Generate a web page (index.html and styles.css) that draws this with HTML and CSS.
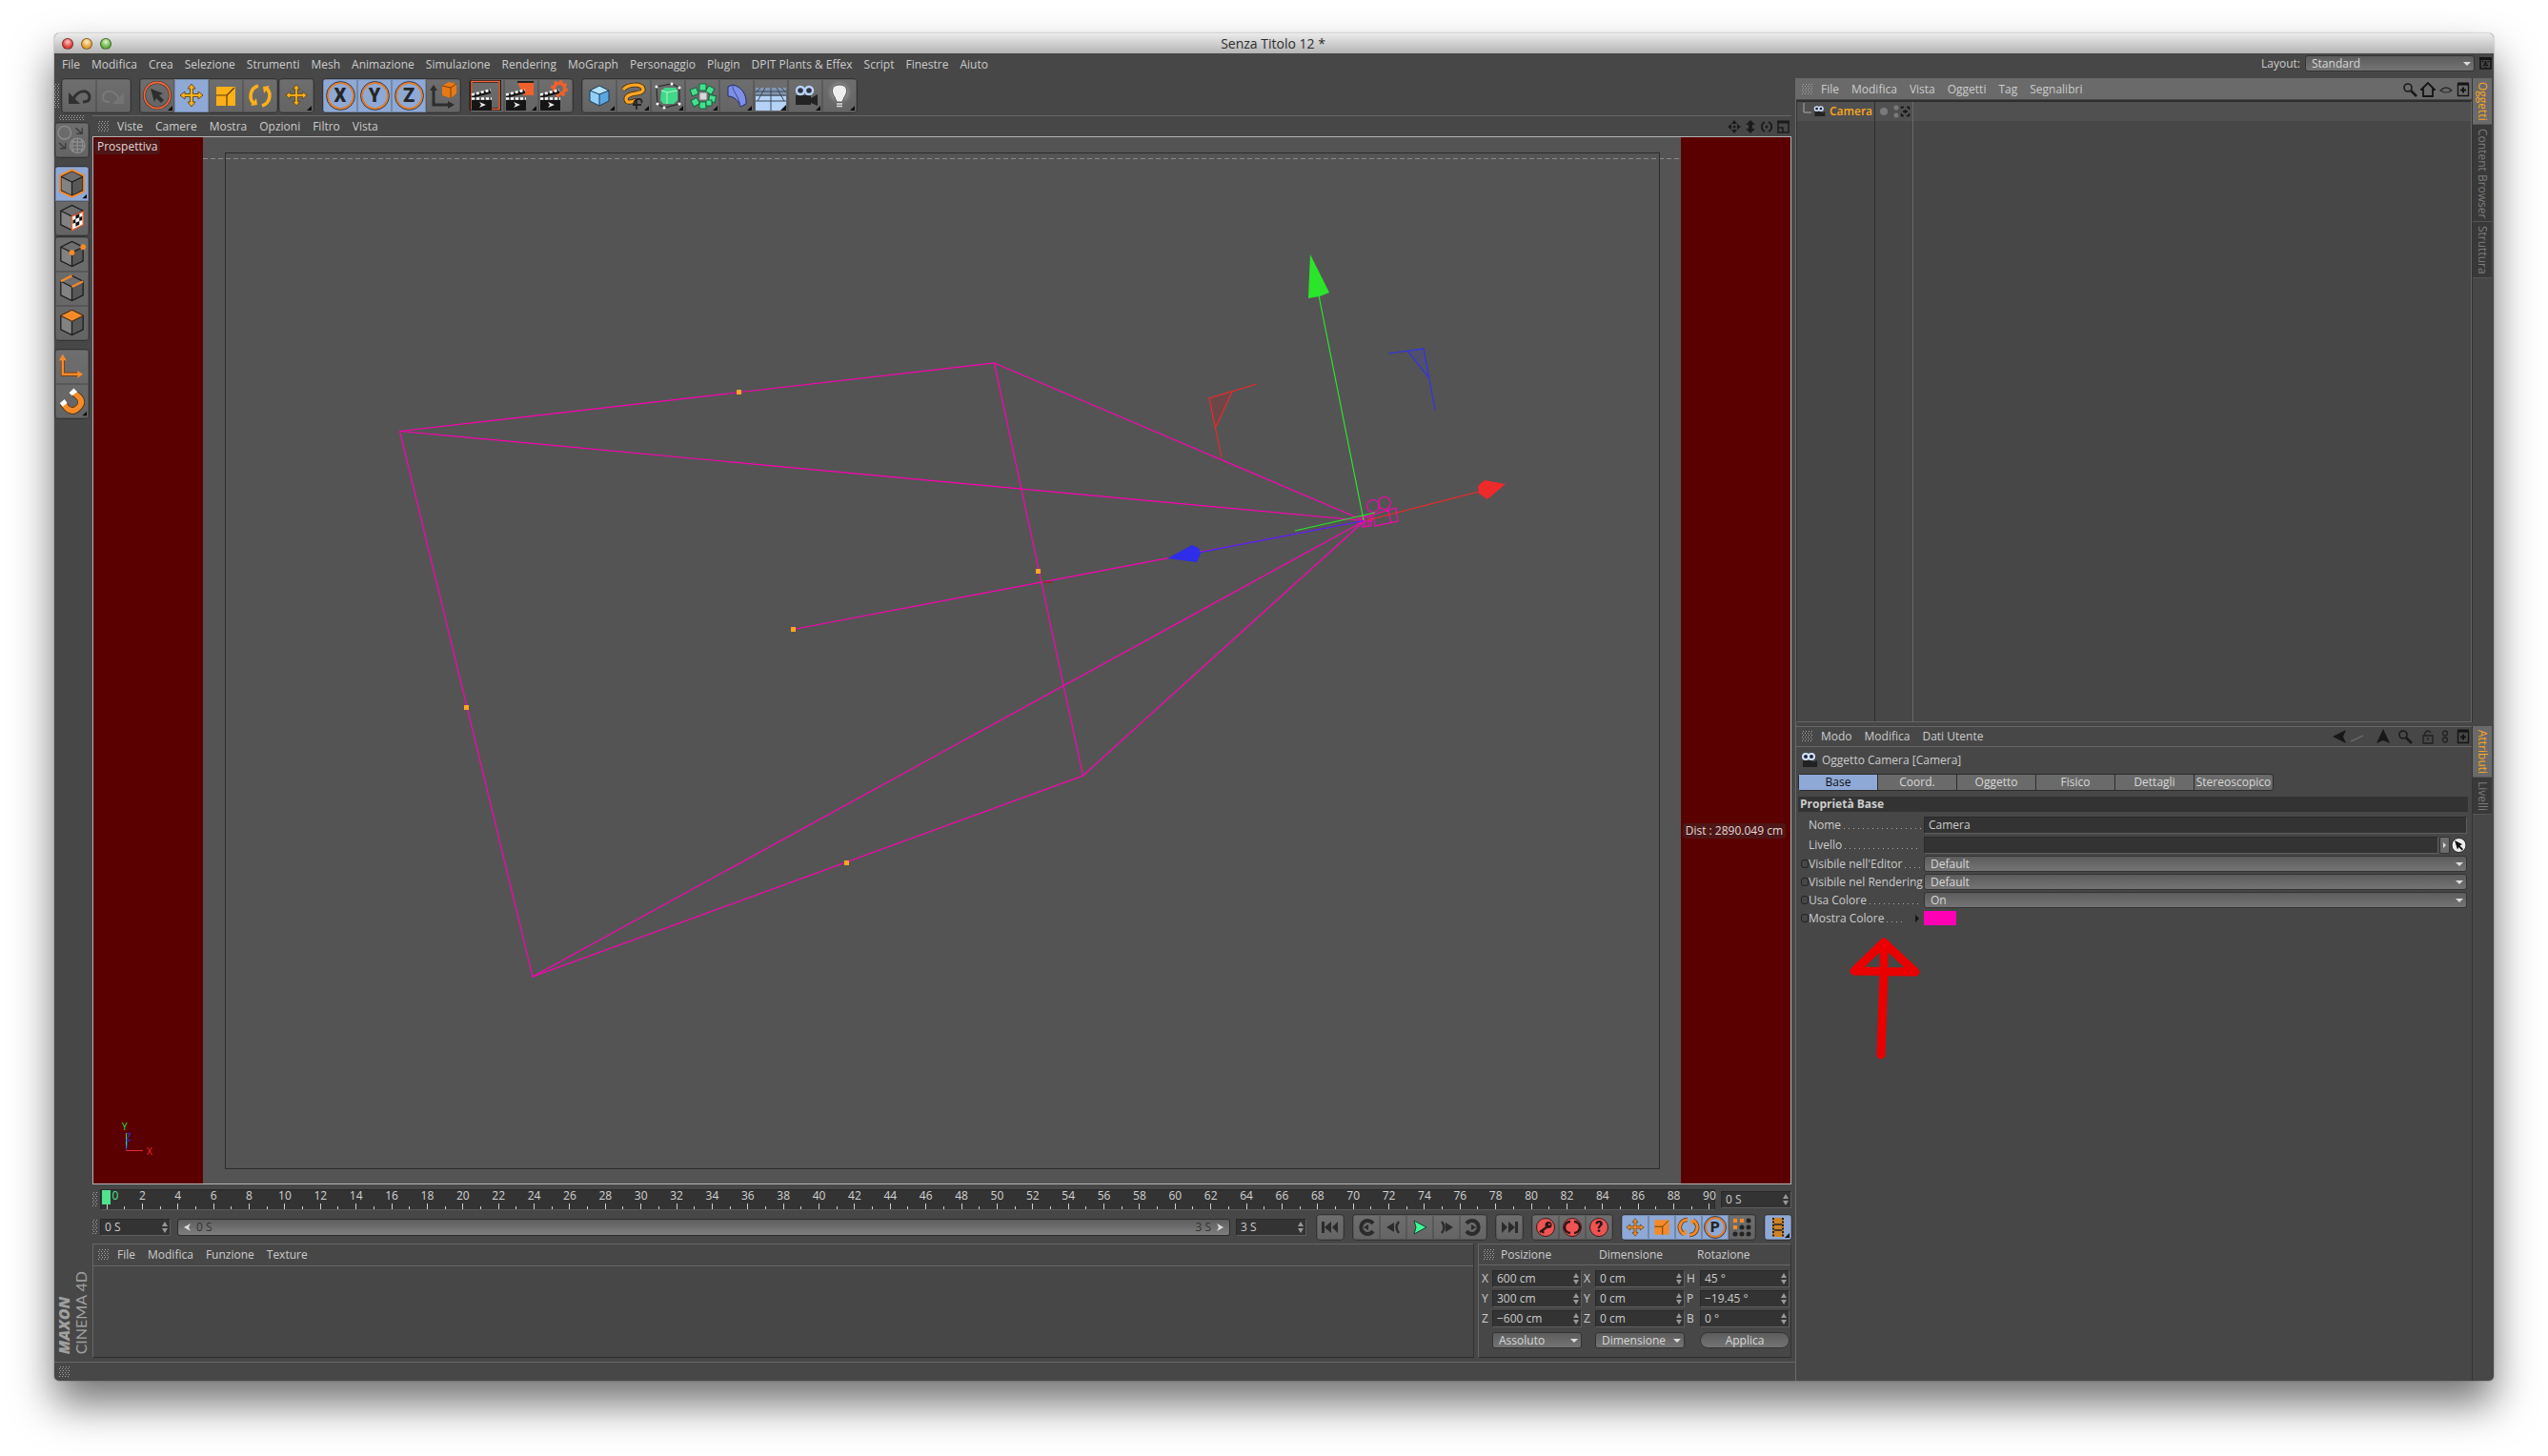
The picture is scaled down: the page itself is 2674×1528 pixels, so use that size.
FILE: index.html
```html
<!DOCTYPE html>
<html lang="it">
<head>
<meta charset="utf-8">
<title>Senza Titolo 12 *</title>
<link rel="stylesheet" href="styles.css">
</head>
<body>
<svg class="defs" aria-hidden="true">
  <defs>
    <symbol id="cube" viewBox="0 0 36 36">
      <path d="M6 10L18 16V31L6 25Z" fill="#828282"/><path d="M18 16L30 10V25L18 31Z" fill="#585858"/><path d="M6 10L18 4L30 10L18 16Z" fill="#6e6e6e"/>
      <path d="M6 10L18 4L30 10V25L18 31L6 25ZM6 10L18 16L30 10M18 16V31" fill="none" stroke="#1c1c1c" stroke-width="1.3"/>
    </symbol>
    <symbol id="move" viewBox="0 0 26 26">
      <path d="M13 1L17 6H14.500V11.500H20V9L25 13L20 17V14.500H14.500V20H17L13 25L9 20H11.500V14.500H6V17L1 13L6 9V11.500H11.500V6H9Z" stroke="#4b3a10" stroke-width=".8"/>
    </symbol>
    <symbol id="scale" viewBox="0 0 26 26">
      <rect x="3" y="3" width="20" height="20" fill="currentColor"/><path d="M3 12H14V23M14 12L22 4" fill="none" stroke="#5a3d08" stroke-width="1.2"/>
    </symbol>
    <symbol id="clap" viewBox="0 0 36 35">
      <path d="M2 22H23V33H2Z" fill="#151515"/><path d="M2 17L22 11V15L2 20Z" fill="#151515"/>
      <path d="M2 16.500L22 11.500M2 20.500H23" stroke="#fff" stroke-width="2.600" stroke-dasharray="3 2"/>
      <path d="M10 24L17 27L10 30L12 27Z" fill="#e8e8e8"/>
    </symbol>
    <symbol id="cam" viewBox="0 0 18 16">
      <path d="M2 8H12V10L17 8V15H2Z" fill="#222"/><circle cx="5" cy="4" r="3" fill="#223" stroke="#cfe2ff" stroke-width="2"/><circle cx="11" cy="4" r="3" fill="#223" stroke="#cfe2ff" stroke-width="2"/>
    </symbol>
    <symbol id="more" viewBox="0 0 6 6"><path d="M6 0V6H0Z" fill="#0c0c0c"/></symbol>
    <symbol id="step" viewBox="0 0 6 12"><path d="M3 0L6 5H0ZM3 12L6 7H0Z" fill="#999"/></symbol>
    <symbol id="lens" viewBox="0 0 16 16"><circle cx="6" cy="6" r="4" fill="none" stroke="#1a1a1a" stroke-width="1.600"/><path d="M9 9L15 15" stroke="#1a1a1a" stroke-width="2.600"/></symbol>
    <symbol id="plus" viewBox="0 0 14 16"><path d="M1.500 2.500H12.500V14.500H1.500Z" fill="none" stroke="#151515" stroke-width="1.400"/><path d="M1 2H13" stroke="#151515" stroke-width="3"/><path d="M4 8.500H10M7 5.500V11.500" stroke="#151515" stroke-width="2"/></symbol>
  </defs>
</svg>
<div class="window">
  <header class="titlebar">
    <div class="lights"><span class="light red"></span><span class="light amber"></span><span class="light green"></span></div>
    <h1>Senza Titolo 12 *</h1>
  </header>
  <div class="menubar">
    <nav class="menu main-menu"><a href="#">File</a><a href="#">Modifica</a><a href="#">Crea</a><a href="#">Selezione</a><a href="#">Strumenti</a><a href="#">Mesh</a><a href="#">Animazione</a><a href="#">Simulazione</a><a href="#">Rendering</a><a href="#">MoGraph</a><a href="#">Personaggio</a><a href="#">Plugin</a><a href="#">DPIT Plants &amp; Effex</a><a href="#">Script</a><a href="#">Finestre</a><a href="#">Aiuto</a></nav>
    <div class="layout-pick">
      <label for="layout">Layout:</label>
      <span class="drop drop-layout"><select id="layout"><option>Standard</option></select></span>
      <svg width="13" height="13" viewBox="0 0 13 13"><path d="M1 2H12V12H1Z" fill="none" stroke="#151515" stroke-width="1.500"/><path d="M0 1.500H13" stroke="#151515" stroke-width="3"/><path d="M3 4L10 10M10 4L3 10M6.500 4V11" stroke="#151515" stroke-width="1.500" stroke-dasharray="2 1"/></svg>
    </div>
  </div>
  <div class="workspace">
    <section class="left">
      <div class="toolbar">
        <span class="grip grip-tall"></span>
        <div class="group">
          <button class="tool" aria-label="Annulla"><svg viewBox="0 0 36 35"><path d="M12 21C17 10 29 11 29 19C29 22 27 24 22 24" fill="none" stroke="#303030" stroke-width="3"/><path d="M7 14V26H19Z" fill="#303030"/></svg></button>
          <button class="tool" aria-label="Ripeti"><svg viewBox="0 0 36 35"><path d="M24 21C19 10 7 11 7 19C7 22 9 24 14 24" fill="none" stroke="#7a7a7a" stroke-width="2"/><path d="M29 14V26H17Z" fill="#747474"/></svg></button>
        </div>
        <div class="cluster">
        <div class="group">
          <button class="tool" aria-label="Seleziona"><svg viewBox="0 0 36 35"><circle cx="18" cy="17" r="13.500" fill="none" stroke="#3a2a24" stroke-width="3"/><circle cx="18" cy="17" r="13.500" fill="none" stroke="#f0683c" stroke-width="1.800"/><path d="M11 10L24 15L20 17L25 22L22 25L17 20L15 24Z" fill="#2e2e2e"/><use href="#more" x="29" y="28" width="5" height="5"/></svg></button>
          <button class="tool on" aria-label="Muovi"><svg viewBox="0 0 36 35"><use href="#move" x="5" y="4" width="26" height="26" fill="#fbb017"/></svg></button>
          <button class="tool amber-ink" aria-label="Scala"><svg viewBox="0 0 36 35"><use href="#scale" x="5" y="5" width="26" height="26"/></svg></button>
          <button class="tool" aria-label="Ruota"><svg viewBox="0 0 36 35"><path d="M16 7A11 11 0 0 0 12 26M20 28A11 11 0 0 0 24 9" fill="none" stroke="#fbb017" stroke-width="3.600"/><path d="M8 28L15 27L14 20ZM28 7L21 8L22 15Z" fill="#fbb017"/></svg></button>
        </div>
        <div class="group"><button class="tool" aria-label="Ultimo strumento"><svg viewBox="0 0 36 35"><use href="#move" x="6" y="5" width="24" height="24" fill="#fbb017"/><use href="#more" x="29" y="28" width="5" height="5"/></svg></button></div>
        </div>
        <div class="group">
          <button class="tool on axis" aria-label="Asse X"><span>X</span></button>
          <button class="tool on axis" aria-label="Asse Y"><span>Y</span></button>
          <button class="tool on axis" aria-label="Asse Z"><span>Z</span></button>
          <button class="tool" aria-label="Sistema di coordinate"><svg viewBox="0 0 36 35"><path d="M8 10V27H24" fill="none" stroke="#2e2e2e" stroke-width="3"/><path d="M4 12L8 6L12 12ZM23 23L30 27L23 31Z" fill="#2e2e2e"/><path d="M17 7L24 3L32 5V15L26 20L17 17Z" fill="#e87a14"/><path d="M17 7L26 9L32 5M26 9V20" fill="none" stroke="#7a3c04"/></svg></button>
        </div>
        <div class="group">
          <button class="tool" aria-label="Render vista"><svg viewBox="0 0 36 35"><rect x="1.500" y="2.500" width="30" height="29" fill="none" stroke="#1b1b1b" stroke-width="3"/><rect x="2" y="2.500" width="29" height="29" fill="none" stroke="#f0683c" stroke-width="1.500"/><use href="#clap" width="36" height="35"/></svg></button>
          <button class="tool" aria-label="Render"><svg viewBox="0 0 36 35"><path d="M14 3H31V17H20Z" fill="#f0602c"/><path d="M14 3H31" stroke="#222" stroke-width="2"/><use href="#clap" width="36" height="35"/><use href="#more" x="29" y="28" width="5" height="5"/></svg></button>
          <button class="tool" aria-label="Impostazioni di render"><svg viewBox="0 0 36 35"><circle cx="22" cy="10" r="5.500" fill="none" stroke="#f0602c" stroke-width="3.500"/><circle cx="22" cy="10" r="7.500" fill="none" stroke="#f0602c" stroke-width="3" stroke-dasharray="3 2.890"/><use href="#clap" width="36" height="35"/></svg></button>
        </div>
        <div class="group">
          <button class="tool" aria-label="Cubo"><svg viewBox="0 0 36 35"><path d="M8 12L18 16V28L8 23Z" fill="#8fd0fb"/><path d="M18 16L28 12V23L18 28Z" fill="#5aa6e0"/><path d="M8 12L18 7L28 12L18 16Z" fill="#b5e2ff"/><path d="M8 12L18 7L28 12V23L18 28L8 23ZM8 12L18 16L28 12M18 16V28" fill="none" stroke="#1d3b52"/><use href="#more" x="29" y="28" width="5" height="5"/></svg></button>
          <button class="tool" aria-label="Spline"><svg viewBox="0 0 36 35"><path d="M7 11C12 5 28 4 28 11C28 17 10 13 10 21C10 26 17 24 21 22" fill="none" stroke="#4a2e08" stroke-width="5"/><path d="M7 11C12 5 28 4 28 11C28 17 10 13 10 21C10 26 17 24 21 22" fill="none" stroke="#fba524" stroke-width="3.400"/><path d="M18 26C20 18 29 21 26 25M21 22V32M17 27H26" fill="none" stroke="#222" stroke-width="1.800"/><use href="#more" x="29" y="28" width="5" height="5"/></svg></button>
          <button class="tool" aria-label="Nurbs"><svg viewBox="0 0 36 35"><path d="M6 8L22 5L30 9V26L14 30L7 26Z" fill="none" stroke="#2a2a2a" stroke-width="1.200"/><path d="M11 12L15 9H26L28 13V22L24 26H13L10 22Z" fill="#3fd98a"/><path d="M11 12L17 14V26M17 14L28 12" fill="none" stroke="#aef7d0"/><g fill="#fff"><circle cx="6" cy="8" r="1.500"/><circle cx="22" cy="5" r="1.500"/><circle cx="30" cy="9" r="1.500"/><circle cx="30" cy="26" r="1.500"/><circle cx="14" cy="30" r="1.500"/><circle cx="7" cy="26" r="1.500"/></g><use href="#more" x="29" y="28" width="5" height="5"/></svg></button>
          <button class="tool" aria-label="Modellazione"><svg viewBox="0 0 36 35"><g fill="#45e08f" stroke="#14643c"><rect x="15" y="5" width="7" height="7"/><rect x="23" y="8" width="7" height="7" transform="rotate(30 26 11)"/><rect x="25" y="17" width="7" height="7" transform="rotate(10 28 20)"/><rect x="15" y="24" width="7" height="7"/><rect x="7" y="21" width="7" height="7" transform="rotate(-30 10 24)"/><rect x="6" y="10" width="7" height="7" transform="rotate(-20 9 13)"/><rect x="22" y="22" width="6" height="6"/></g><rect x="15" y="14" width="8" height="8" fill="#d8d8d8" stroke="#777"/><use href="#more" x="29" y="28" width="5" height="5"/></svg></button>
          <button class="tool" aria-label="Deformatore"><svg viewBox="0 0 36 35"><path d="M9 8L14 6C23 8 29 16 28 26L22 29C20 22 15 18 9 18Z" fill="#7f8fe6" stroke="#242c66"/><path d="M14 6C13 13 20 16 22 29" fill="none" stroke="#3c489a"/><use href="#more" x="29" y="28" width="5" height="5"/></svg></button>
          <button class="tool" aria-label="Scena"><svg viewBox="0 0 36 35"><path d="M2 9H34V33H2Z" fill="#b4d2f6"/><path d="M2 9H34V18H2Z" fill="#8296ae"/><path d="M2 13H34M2 17H34M2 23H34M18 9V33M12 9L4 23M24 9L32 23M7 9L2 14M29 9L34 14" stroke="#3a4656" stroke-width="1"/><path d="M34 27V33H28Z" fill="#111"/></svg></button>
          <button class="tool" aria-label="Camera"><svg viewBox="0 0 36 35"><path d="M8 17H24V20L31 16V28L24 25V27H8Z" fill="#242424"/><circle cx="13" cy="12" r="4" fill="#334" stroke="#b9d4fa" stroke-width="2.400"/><circle cx="22" cy="12" r="4" fill="#334" stroke="#b9d4fa" stroke-width="2.400"/><use href="#more" x="29" y="28" width="5" height="5"/></svg></button>
          <button class="tool" aria-label="Luce"><svg viewBox="0 0 36 35"><defs><radialGradient id="halo"><stop offset=".3" stop-color="#ccc" stop-opacity=".8"/><stop offset="1" stop-color="#777" stop-opacity="0"/></radialGradient></defs><circle cx="18" cy="14" r="14" fill="url(#halo)"/><path d="M18 6C9 6 9 14 13 19L15 24H21L23 19C27 14 27 6 18 6Z" fill="#eee" stroke="#555"/><path d="M15 26H21M15 28.500H21" stroke="#ddd" stroke-width="1.500"/><use href="#more" x="29" y="28" width="5" height="5"/></svg></button>
        </div>
      </div>
      <div class="stage">
        <aside class="modes">
          <span class="grip grip-wide"></span>
          <div class="group group-v"><button class="tool" aria-label="Converti"><svg viewBox="0 0 36 36"><g fill="none" stroke="#8c8c8c" stroke-width="1.400"><circle cx="10" cy="10" r="7"/><circle cx="24" cy="24" r="8"/><path d="M24 16V32M16 24H32M18 19Q24 22 30 19M18 29Q24 26 30 29M20 17Q17 24 20 31M28 17Q31 24 28 31"/><path d="M22 5L29 11M29 5V11H23M4 21L11 27M11 21V27H5" stroke="#3c3c3c"/></g></svg></button></div>
          <div class="cluster cluster-v">
          <div class="group group-v">
            <button class="tool on" aria-label="Modo oggetto"><svg viewBox="0 0 36 36"><use href="#cube" width="36" height="36"/><path d="M5 9L18 3L31 9V26L18 32L5 26Z" fill="none" stroke="#f58a28" stroke-width="2"/><use href="#more" x="29" y="29" width="5" height="5"/></svg></button>
            <button class="tool" aria-label="Modo texture"><svg viewBox="0 0 36 36"><use href="#cube" width="36" height="36"/><path d="M18 16L30 11V25L18 31Z" fill="#fff" stroke="#f0683c" stroke-width="1.500"/><path d="M22 15L26 13V17L22 19ZM19 20L22 19V23L19 24ZM26 17L29 16V20L26 21ZM22 23L26 21V25L22 27Z" fill="#111"/></svg></button>
          </div>
          <div class="group group-v">
            <button class="tool" aria-label="Modo punti"><svg viewBox="0 0 36 36"><use href="#cube" width="36" height="36"/><circle cx="18" cy="16" r="3" fill="#f58a28"/><circle cx="30" cy="10" r="3" fill="#f58a28"/></svg></button>
            <button class="tool" aria-label="Modo spigoli"><svg viewBox="0 0 36 36"><use href="#cube" width="36" height="36"/><path d="M6 10L18 4M18 16L30 10" stroke="#f58a28" stroke-width="2.400"/></svg></button>
            <button class="tool" aria-label="Modo poligoni"><svg viewBox="0 0 36 36"><use href="#cube" width="36" height="36"/><path d="M6 10L18 4L30 10L18 16Z" fill="#f58a28" stroke="#5a300a" stroke-width=".8"/></svg></button>
          </div>
          </div>
          <div class="group group-v">
            <button class="tool" aria-label="Asse oggetto"><svg viewBox="0 0 36 36"><path d="M8 9V26H26" fill="none" stroke="#6a3408" stroke-width="4"/><path d="M8 9V26H26" fill="none" stroke="#f58a28" stroke-width="2.600"/><path d="M4 11L8 4L12 11ZM24 22L30 26L24 30Z" fill="#f58a28"/></svg></button>
            <button class="tool" aria-label="Snap"><svg viewBox="0 0 36 36"><path d="M8 20L13 26Q19 31 25 25T25 13L19 8" fill="none" stroke="#4a2a0a" stroke-width="7.500"/><path d="M8 20L13 26Q19 31 25 25T25 13L19 8" fill="none" stroke="#f58a28" stroke-width="6"/><path d="M5 20L10 16L13 20L8 24ZM15 9L20 4L24 8L18 12Z" fill="#fff"/><use href="#more" x="29" y="29" width="5" height="5"/></svg></button>
          </div>
          <div class="brand"><b>MAXON</b><span>CINEMA 4D</span></div>
        </aside>
        <div class="center">
          <div class="panel-menu">
            <span class="grip"></span>
            <nav class="menu"><a href="#">Viste</a><a href="#">Camere</a><a href="#">Mostra</a><a href="#">Opzioni</a><a href="#">Filtro</a><a href="#">Vista</a></nav>
            <svg class="view-nav" width="66" height="14" viewBox="0 0 66 14"><g fill="#1b1b1b"><path d="M7 0L10 4H4ZM7 14L10 10H4ZM0 7L4 4V10ZM14 7L10 4V10Z"/><circle cx="7" cy="7" r="1.500"/><path d="M24 0L29 5H26V9H29L24 14L19 9H22V5H19Z"/></g><path d="M39 2A5.500 5.500 0 0 0 39 12M43 12A5.500 5.500 0 0 0 43 2" fill="none" stroke="#1b1b1b" stroke-width="1.800"/><circle cx="41" cy="7" r="1.500" fill="#1b1b1b"/><path d="M53 2H64V13H53ZM53 8H58V13" fill="none" stroke="#1b1b1b" stroke-width="1.500"/><path d="M52 2H65" stroke="#1b1b1b" stroke-width="3"/></svg>
          </div>
          <div class="viewport">
            <svg class="scene" viewBox="98 144 1781 1098" preserveAspectRatio="none">
              <rect x="98" y="144" width="115" height="1098" fill="#5a0000"/>
              <rect x="1764" y="144" width="115" height="1098" fill="#5a0000"/>
              <path d="M213 166.500H1764" stroke="#8a8a8a" stroke-dasharray="5 3"/>
              <rect x="236.500" y="160.500" width="1505" height="1066" fill="none" stroke="#2c2c2c"/>
              <g fill="none" stroke="#ff00b4" stroke-width="1.200">
                <path d="M419.500 452.500L1043.500 381L1136.500 814L559 1025Z"/>
                <path d="M419.500 452.500L1432 546.500L1043.500 381M1136.500 814L1432 546.500L559 1025M832.500 660.500L1432 546.500"/>
                <circle cx="1441" cy="531" r="6.500"/><circle cx="1453" cy="528" r="6.500"/>
                <path d="M1441 540L1465 533L1467 547L1443 552ZM1457 535L1460 549M1428 543L1439 541V552L1430 553ZM1432 541V552M1436 541V552M1428 547H1440"/>
              </g>
              <g fill="#ffa51e"><path d="M773 409h5v5h-5zM830 658h5v5h-5zM1087 597h5v5h-5zM487 740h5v5h-5zM886 903h5v5h-5z"/></g>
              <path d="M1095 611H1104" stroke="#b01010"/><path d="M1095.500 611V604" stroke="#148014"/>
              <path d="M1431 546L1384 310M1359 557L1443 538" stroke="#2be52b" stroke-width="1.200"/><path d="M1375 267L1395 307L1385 311L1373 313Z" fill="#2be52b"/>
              <path d="M1431 546.500L1258 580" stroke="#3030f0" stroke-width="1.200"/><path d="M1225 586L1251 572L1258 575L1260 581L1256 590Z" fill="#2e2ee8"/>
              <path d="M1435 546L1552 516" stroke="#f02828" stroke-width="1.200"/><path d="M1580 508L1558 504L1551 510L1552 518L1561 524Z" fill="#ee2a2a"/>
              <path d="M1269 418L1293 411L1276 448Z" fill="#6b4747"/><path d="M1319 403L1269 418L1282 480M1293 411L1276 448" fill="none" stroke="#f02828" stroke-width="1.200"/>
              <path d="M1477 368L1494 366L1499 396Z" fill="#50506c"/><path d="M1457 371L1494 366L1506 430M1477 368L1499 396" fill="none" stroke="#3030f0" stroke-width="1.200"/>
              <path d="M132.500 1189V1207" stroke="#2be52b"/><path d="M132.500 1207.500H150" stroke="#f02828"/><path d="M132.500 1207L134 1197" stroke="#3030f0"/>
              <g class="axis-name"><text x="128" y="1186" fill="#2be52b">Y</text><text x="154" y="1212" fill="#f02828">X</text><text x="132" y="1197" fill="#3030f0">Z</text></g>
            </svg>
            <span class="tag tag-view">Prospettiva</span>
            <span class="tag tag-dist">Dist : 2890.049 cm</span>
          </div>
          <div class="timeline">
            <span class="grip grip-slim"></span>
            <ol class="ruler"><li class="now">0</li><li></li><li>2</li><li></li><li>4</li><li></li><li>6</li><li></li><li>8</li><li></li><li>10</li><li></li><li>12</li><li></li><li>14</li><li></li><li>16</li><li></li><li>18</li><li></li><li>20</li><li></li><li>22</li><li></li><li>24</li><li></li><li>26</li><li></li><li>28</li><li></li><li>30</li><li></li><li>32</li><li></li><li>34</li><li></li><li>36</li><li></li><li>38</li><li></li><li>40</li><li></li><li>42</li><li></li><li>44</li><li></li><li>46</li><li></li><li>48</li><li></li><li>50</li><li></li><li>52</li><li></li><li>54</li><li></li><li>56</li><li></li><li>58</li><li></li><li>60</li><li></li><li>62</li><li></li><li>64</li><li></li><li>66</li><li></li><li>68</li><li></li><li>70</li><li></li><li>72</li><li></li><li>74</li><li></li><li>76</li><li></li><li>78</li><li></li><li>80</li><li></li><li>82</li><li></li><li>84</li><li></li><li>86</li><li></li><li>88</li><li></li><li>90</li></ol>
            <span class="field field-time"><input type="text" aria-label="Tempo corrente" value="0 S"><svg><use href="#step"/></svg></span>
          </div>
          <div class="transport">
            <span class="grip grip-slim"></span>
            <span class="field field-time"><input type="text" aria-label="Inizio" value="0 S"><svg><use href="#step"/></svg></span>
            <div class="range"><span><svg width="7" height="8" viewBox="0 0 7 8"><path d="M0 4L7 0L5 4L7 8Z" fill="#ddd"/></svg>0 S</span><span>3 S<svg width="7" height="8" viewBox="0 0 7 8"><path d="M7 4L0 0L2 4L0 8Z" fill="#ddd"/></svg></span></div>
            <span class="field field-time"><input type="text" aria-label="Fine" value="3 S"><svg><use href="#step"/></svg></span>
            <div class="players">
              <div class="group small"><button class="tool" aria-label="Vai all'inizio"><svg viewBox="0 0 28 26"><path d="M5 7H8V19H5ZM15 7V19L8 13ZM22 7L16 13L22 19Z" fill="#2b2b2b"/></svg></button></div>
              <div class="group small">
                <button class="tool" aria-label="Chiave precedente"><svg viewBox="0 0 28 26"><path d="M21 9A7 7 0 1 0 21 17" fill="none" stroke="#2b2b2b" stroke-width="4"/><path d="M11 13L16 10V16Z" fill="#2b2b2b"/></svg></button>
                <button class="tool" aria-label="Fotogramma precedente"><svg viewBox="0 0 28 26"><path d="M7 13L15 8V18Z" fill="#2b2b2b"/><path d="M20 7Q15 13 20 19" fill="none" stroke="#2b2b2b" stroke-width="2.400"/></svg></button>
                <button class="tool" aria-label="Riproduci"><svg viewBox="0 0 28 26"><path d="M8 6L21 13L8 20L10 13Z" fill="#3dfa96" stroke="#1b3a2a"/></svg></button>
                <button class="tool" aria-label="Fotogramma successivo"><svg viewBox="0 0 28 26"><path d="M21 13L13 8V18Z" fill="#2b2b2b"/><path d="M9 7Q14 13 9 19" fill="none" stroke="#2b2b2b" stroke-width="2.400"/></svg></button>
                <button class="tool" aria-label="Chiave successiva"><svg viewBox="0 0 28 26"><path d="M7 9A7 7 0 1 1 7 17" fill="none" stroke="#2b2b2b" stroke-width="4"/><path d="M17 13L12 10V16Z" fill="#2b2b2b"/></svg></button>
              </div>
              <div class="group small"><button class="tool" aria-label="Vai alla fine"><svg viewBox="0 0 28 26"><path d="M23 7H20V19H23ZM13 7V19L20 13ZM6 7L12 13L6 19Z" fill="#2b2b2b"/></svg></button></div>
              <div class="group small">
                <button class="tool" aria-label="Registra chiave"><svg viewBox="0 0 28 26"><circle cx="14" cy="13" r="9.500" fill="#ee5454" stroke="#3b1a1a"/><circle cx="17" cy="10.500" r="3.500" fill="#2b1414"/><path d="M15 13L8 18M10 16L12 19" stroke="#2b1414" stroke-width="2.400"/><circle cx="18" cy="10" r="1" fill="#ee5454"/></svg></button>
                <button class="tool" aria-label="Autochiave"><svg viewBox="0 0 28 26"><circle cx="14" cy="13" r="9.500" fill="#ee5454" stroke="#3b1a1a"/><path d="M12 7A6 6 0 0 0 12 19M16 7A6 6 0 0 1 16 19" fill="none" stroke="#2b1414" stroke-width="2.400"/></svg></button>
                <button class="tool ask" aria-label="Selezione chiavi"><span>?</span></button>
              </div>
              <div class="group small">
                <button class="tool on" aria-label="Posizione"><svg viewBox="0 0 28 26"><use href="#move" x="4" y="3" width="20" height="20" fill="#f58a28"/></svg></button>
                <button class="tool on orange-ink" aria-label="Scala"><svg viewBox="0 0 28 26"><use href="#scale" x="4" y="3" width="20" height="20"/></svg></button>
                <button class="tool on" aria-label="Rotazione"><svg viewBox="0 0 28 26"><path d="M13 5A8 8 0 0 0 9 20M15 21A8 8 0 0 0 19 6" fill="none" stroke="#5a3a1a" stroke-width="4.500"/><path d="M13 5A8 8 0 0 0 9 20M15 21A8 8 0 0 0 19 6" fill="none" stroke="#f58a28" stroke-width="3"/><path d="M6 21L12 21L11 15ZM22 5L16 5L17 11Z" fill="#f58a28"/></svg></button>
                <button class="tool on axis axis-small" aria-label="Parametri"><span>P</span></button>
                <button class="tool" aria-label="PLA"><svg viewBox="0 0 28 26"><g fill="#222"><circle cx="21" cy="6" r="2.500"/><circle cx="14" cy="13" r="2.500"/><circle cx="21" cy="13" r="2.500"/><circle cx="7" cy="20" r="2.500"/><circle cx="14" cy="20" r="2.500"/><circle cx="21" cy="20" r="2.500"/></g><path d="M5 4h4v4h-4zM12 4h4v4h-4zM5 11h4v4h-4z" fill="#f58a28"/></svg></button>
              </div>
              <div class="group small"><button class="tool on" aria-label="Timeline"><svg viewBox="0 0 28 26"><path d="M8 3H20V23H8Z" fill="#d08224"/><path d="M9 3V23M19 3V23" stroke="#222" stroke-width="2" stroke-dasharray="2 1.500"/><path d="M10 10H18M10 16H18" stroke="#222" stroke-width="1.500"/><use href="#more" x="21" y="19" width="5" height="5"/></svg></button></div>
            </div>
          </div>
          <div class="bottom">
            <section class="materials">
              <div class="panel-menu"><span class="grip"></span><nav class="menu"><a href="#">File</a><a href="#">Modifica</a><a href="#">Funzione</a><a href="#">Texture</a></nav></div>
            </section>
            <section class="coords">
              <div class="coords-head"><span class="grip"></span><span>Posizione</span><span>Dimensione</span><span>Rotazione</span></div>
              <form class="coords-grid">
                <label for="px">X</label><span class="field"><input id="px" type="text" value="600 cm"><svg><use href="#step"/></svg></span>
                <label for="sx">X</label><span class="field"><input id="sx" type="text" value="0 cm"><svg><use href="#step"/></svg></span>
                <label for="rh">H</label><span class="field"><input id="rh" type="text" value="45 °"><svg><use href="#step"/></svg></span>
                <label for="py">Y</label><span class="field"><input id="py" type="text" value="300 cm"><svg><use href="#step"/></svg></span>
                <label for="sy">Y</label><span class="field"><input id="sy" type="text" value="0 cm"><svg><use href="#step"/></svg></span>
                <label for="rp">P</label><span class="field"><input id="rp" type="text" value="−19.45 °"><svg><use href="#step"/></svg></span>
                <label for="pz">Z</label><span class="field"><input id="pz" type="text" value="−600 cm"><svg><use href="#step"/></svg></span>
                <label for="sz">Z</label><span class="field"><input id="sz" type="text" value="0 cm"><svg><use href="#step"/></svg></span>
                <label for="rb">B</label><span class="field"><input id="rb" type="text" value="0 °"><svg><use href="#step"/></svg></span>
                <span class="drop col-pos"><select aria-label="Modo posizione"><option>Assoluto</option></select></span>
                <span class="drop col-dim"><select aria-label="Modo dimensione"><option>Dimensione</option></select></span>
                <button type="button" class="apply col-rot">Applica</button>
              </form>
            </section>
          </div>
        </div>
      </div>
      <footer class="status"><span class="grip"></span></footer>
    </section>
    <section class="right">
      <div class="dock">
        <div class="panel">
          <div class="panel-menu panel-menu-lit">
            <span class="grip"></span>
            <nav class="menu"><a href="#">File</a><a href="#">Modifica</a><a href="#">Vista</a><a href="#">Oggetti</a><a href="#">Tag</a><a href="#">Segnalibri</a></nav>
            <div class="panel-icons">
              <svg width="16" height="16"><use href="#lens"/></svg>
              <svg width="16" height="16" viewBox="0 0 16 16"><path d="M1 8L8 1L15 8H13V15H3V8Z" fill="none" stroke="#151515" stroke-width="1.800"/></svg>
              <svg width="16" height="16" viewBox="0 0 16 16"><path d="M2 9Q8 3 14 9Q8 13 2 9Z" fill="none" stroke="#2a2a2a" stroke-width="1.200"/></svg>
              <svg width="14" height="16"><use href="#plus"/></svg>
            </div>
          </div>
          <div class="objects">
            <div class="obj-name"><div class="obj-row"><svg width="10" height="20" viewBox="0 0 10 20"><path d="M1 1V11H9" fill="none" stroke="#aaa"/></svg><svg width="13" height="12"><use href="#cam"/></svg><a href="#">Camera</a></div></div>
            <div class="obj-flags"><div class="obj-row"><svg width="38" height="18" viewBox="0 0 38 18"><circle cx="9" cy="9" r="4" fill="#7a7a7a"/><circle cx="22" cy="5" r="2.500" fill="#7a7a7a"/><circle cx="22" cy="13" r="2.500" fill="#7a7a7a"/><path d="M27.500 6V4.500H30M33 4.500H35.500V7M35.500 11V13.500H33M30 13.500H27.500V11M31.500 7V11M29 9H34" fill="none" stroke="#111" stroke-width="1.300"/></svg></div></div>
            <div class="obj-tags"><div class="obj-row"></div></div>
          </div>
        </div>
        <div class="tabs"><button class="tab tab-on">Oggetti</button><button class="tab">Content Browser</button><button class="tab">Struttura</button></div>
      </div>
      <div class="dock">
        <div class="panel attributes">
          <div class="panel-menu">
            <span class="grip"></span>
            <nav class="menu"><a href="#">Modo</a><a href="#">Modifica</a><a href="#">Dati Utente</a></nav>
            <div class="panel-icons wide-icons">
              <svg width="38" height="16" viewBox="0 0 38 16"><path d="M0 8L14 1L11 8L14 15Z" fill="#181818"/><path d="M19 13L32 7" stroke="#666" stroke-width="1.500"/></svg>
              <svg width="14" height="16" viewBox="0 0 14 16"><path d="M7 0L14 15L7 12L0 15Z" fill="#181818"/></svg>
              <svg width="18" height="16" viewBox="0 0 18 16"><use href="#lens" width="16" height="16"/></svg>
              <svg width="12" height="16" viewBox="0 0 12 16"><path d="M1 7H11V15H1ZM3 7V4Q6 0 9 4" fill="none" stroke="#222" stroke-width="1.400"/><path d="M6 9V12" stroke="#222" stroke-width="1.500"/></svg>
              <svg width="8" height="16" viewBox="0 0 8 16"><circle cx="4" cy="4.500" r="2.500" fill="none" stroke="#222" stroke-width="1.300"/><circle cx="4" cy="11.500" r="2.500" fill="none" stroke="#222" stroke-width="1.300"/></svg>
              <svg width="14" height="16"><use href="#plus"/></svg>
            </div>
          </div>
          <div class="attr-title"><svg width="18" height="16"><use href="#cam"/></svg><span>Oggetto Camera [Camera]</span></div>
          <div class="attr-tabs"><button class="on">Base</button><button>Coord.</button><button>Oggetto</button><button>Fisico</button><button>Dettagli</button><button>Stereoscopico</button></div>
          <h2>Proprietà Base</h2>
          <form class="props">
            <div class="prop prop-text"><label for="nome">Nome</label><span class="field"><input id="nome" type="text" value="Camera"></span></div>
            <div class="prop prop-text"><label for="livello">Livello</label><span class="field"><input id="livello" type="text" value=""></span><button type="button" class="mini" aria-label="Scegli livello"></button><button type="button" class="pick" aria-label="Preleva"><svg width="17" height="18" viewBox="0 0 17 18"><circle cx="8.500" cy="9" r="7.500" fill="#eee" stroke="#222"/><path d="M4 4L12 8L9.500 9.500L13 13L11.500 14.500L8.500 11L7 13.500Z" fill="#111"/></svg></button></div>
            <div class="prop keyed"><label for="ved">Visibile nell'Editor</label><span class="drop"><select id="ved"><option>Default</option></select></span></div>
            <div class="prop keyed"><label for="vren">Visibile nel Rendering</label><span class="drop"><select id="vren"><option>Default</option></select></span></div>
            <div class="prop keyed"><label for="usa">Usa Colore</label><span class="drop"><select id="usa"><option>On</option></select></span></div>
            <div class="prop keyed prop-color"><label for="col">Mostra Colore</label><button type="button" id="col" class="swatch" aria-label="Mostra Colore"></button></div>
          </form>
          <svg class="note" width="80" height="136" viewBox="0 0 80 136"><path d="M42 9L11 39L75 40ZM42 12V40L39 127" fill="none" stroke="#ea0000" stroke-width="9" stroke-linecap="round" stroke-linejoin="round"/></svg>
        </div>
        <div class="tabs"><button class="tab tab-on">Attributi</button><button class="tab">Livelli</button></div>
      </div>
    </section>
  </div>
</div>
</body>
</html>
```
FILE: styles.css
```css
* { box-sizing: border-box; }
body {
  margin: 0;
  min-height: 100vh;
  padding: 35px 57px 79px;
  display: flex;
  background: #fff;
  font: 12px/16px "Open Sans", "Noto Sans", sans-serif;
  color: #cccccc;
}
button, input, select { font: inherit; color: inherit; margin: 0; }
button { padding: 0; border: 0; background: none; }
a { color: inherit; text-decoration: none; white-space: nowrap; }
svg { display: block; flex: none; }
.defs { position: absolute; width: 0; height: 0; }

/* Window frame */
.window {
  flex: 1;
  min-width: 0;
  display: flex;
  flex-direction: column;
  background: #474747;
  border-radius: 5px;
  box-shadow: 0 24px 44px rgba(0, 0, 0, .55), 0 0 2px rgba(0, 0, 0, .4);
}
.titlebar {
  height: 21px;
  display: flex;
  align-items: center;
  padding: 0 8px;
  border-radius: 5px 5px 0 0;
  background: linear-gradient(#ececec, #b4b4b4);
}
.titlebar h1 { flex: 1; margin: 0 54px 0 0; text-align: center; font-size: 14px; font-weight: 400; color: #2c2c2c; }
.lights { display: flex; gap: 8px; }
.light { width: 12px; height: 12px; border-radius: 50%; border: 1px solid rgba(0, 0, 0, .45); }
.red { background: radial-gradient(circle at 50% 30%, #ffc9c6, #e2453f 60%); }
.amber { background: radial-gradient(circle at 50% 30%, #fff0c4, #e8a33a 60%); }
.green { background: radial-gradient(circle at 50% 30%, #e0f6cc, #6cb54a 60%); }

.menubar { height: 26px; display: flex; justify-content: space-between; align-items: center; padding: 0 0 2px 8px; }
.menu { display: flex; gap: 13px; }
.main-menu { gap: 12px; }
.layout-pick { display: flex; align-items: center; gap: 5px; padding: 0 2px 3px 0; }

/* Drop-downs and buttons */
.drop { position: relative; display: flex; height: 17px; }
.drop::after {
  content: "";
  position: absolute;
  right: 4px;
  top: 7px;
  border: 4px solid transparent;
  border-top-color: #ddd;
  border-bottom: 0;
  pointer-events: none;
}
.drop select, .apply {
  appearance: none;
  width: 100%;
  height: 17px;
  padding: 0 6px;
  border: 1px solid #333;
  border-radius: 3px;
  background: linear-gradient(#5c5c5c, #747474);
  color: #d8d8d8;
  line-height: 15px;
}
.apply { border-radius: 9px; text-align: center; }
.drop-layout { width: 178px; }

.workspace { flex: 1; display: grid; grid-template-columns: minmax(0, 1fr) 733px; }
.left { display: flex; flex-direction: column; }

/* Dotted drag handles */
.grip {
  flex: none;
  width: 11px;
  height: 12px;
  background-image:
    conic-gradient(from 270deg at 1px 1px, #a4a4a4 90deg, transparent 0),
    conic-gradient(from 270deg at 1px 1px, #a4a4a4 90deg, transparent 0);
  background-size: 3px 4px;
  background-position: 1px 0, 0 2px;
}
.grip-tall { width: 6px; height: 26px; margin-right: -8px; }
.grip-wide { width: 27px; height: 5px; margin: 0 0 -7px 4px; }
.grip-slim { width: 5px; height: 16px; }

/* Icon buttons */
.toolbar { display: flex; align-items: center; gap: 10px; height: 39px; padding: 1px 0 3px; }
.cluster { display: flex; gap: 2px; }
.cluster-v { flex-direction: column; }
.group {
  display: flex;
  border-radius: 4px;
  overflow: hidden;
  background: linear-gradient(#6e6e6e, #646464);
  box-shadow: 0 0 0 1px #333;
}
.group-v { flex-direction: column; }
.tool { width: 36px; height: 35px; display: grid; place-items: center; box-shadow: inset 0 0 0 1px rgba(40, 40, 40, .25); }
.group-v .tool { height: 36px; width: 35px; }
.small .tool { width: 28px; height: 26px; }
.tool svg { width: 100%; height: 100%; }
.tool.on { background: #8ea9d6; }
.amber-ink { color: #fbb017; }
.orange-ink { color: #f58a28; }
.axis span {
  width: 29px;
  height: 29px;
  border: 2px solid #e07d28;
  border-radius: 50%;
  outline: 1px solid #3a3d46;
  font: 900 20px/25px Roboto, sans-serif;
  color: #262626;
}
.axis-small span { width: 22px; height: 22px; font-size: 15px; line-height: 18px; }
.ask span {
  width: 20px;
  height: 20px;
  border: 1px solid #3b1a1a;
  border-radius: 50%;
  background: #ee5454;
  font: 900 16px/18px Roboto, sans-serif;
  color: #2b1414;
}

.stage { flex: 1; display: grid; grid-template-columns: 40px minmax(0, 1fr); padding-right: 4px; }
.modes { display: flex; flex-direction: column; gap: 10px; align-items: flex-start; padding-left: 1px; }
.brand {
  width: 36px;
  margin: auto 0 4px;
  writing-mode: vertical-rl;
  rotate: 180deg;
  display: flex;
  flex-direction: column;
  color: #a0a0a0;
  font: 16px/18px Lato, sans-serif;
}
.brand b { font: italic 800 16px/18px "Open Sans", sans-serif; }

/* Viewport */
.center { display: flex; flex-direction: column; min-width: 0; }
.panel-menu { height: 22px; display: flex; align-items: center; gap: 9px; padding-left: 6px; border-top: 1px solid #666; }
.view-nav { margin-left: auto; margin-right: 1px; }
.viewport { position: relative; flex: 1; min-height: 0; border: 1px solid #b4b4b4; background: #545454; overflow: hidden; }
.scene { position: absolute; width: 100%; height: 100%; }
.axis-name { font: 10px "Open Sans", sans-serif; }
.tag { position: absolute; padding: 0 3px; border-radius: 3px; background: rgba(70, 40, 40, .55); color: #e2d8d8; white-space: nowrap; }
.tag-view { left: 1px; top: 2px; }
.tag-dist { right: 5px; bottom: 33%; }

/* Timeline */
.timeline { height: 22px; margin-top: 5px; display: flex; align-items: center; gap: 3px; }
.ruler {
  flex: 1;
  height: 22px;
  margin: 0 3px 0 0;
  padding: 0 5px 0 6px;
  display: flex;
  justify-content: space-between;
  list-style: none;
  background: #333;
  border: 1px solid #2a2a2a;
  border-bottom-color: #5a5a5a;
}
.ruler li { width: 0; display: flex; flex-direction: column; align-items: center; justify-content: space-between; line-height: 12px; color: #d4d4d4; }
.ruler li::after { content: ""; flex: none; width: 1px; height: 6px; background: #d0d0d0; }
.ruler li:empty::after { height: 3px; margin-top: auto; }
.ruler .now { color: #4fe38f; text-indent: 18px; position: relative; }
.ruler .now::before { content: ""; position: absolute; left: -5px; top: 0; width: 9px; height: 15px; background: #4fe38f; }

.field {
  display: flex;
  align-items: center;
  height: 18px;
  padding-right: 2px;
  background: #333;
  border: 1px solid #292929;
  border-right-color: #5e5e5e;
  border-bottom-color: #5e5e5e;
}
.field input { flex: 1; width: 0; min-width: 0; height: 16px; padding: 0 4px; border: 0; background: none; outline: 0; }
.field svg { width: 6px; height: 12px; }
.field-time { width: 74px; }

.transport { height: 26px; margin-top: 5px; display: flex; align-items: center; gap: 3px; }
.range {
  flex: 1;
  display: flex;
  justify-content: space-between;
  height: 18px;
  margin: 0 3px 0 4px;
  padding: 0 6px;
  border: 1px solid #2c2c2c;
  border-radius: 3px;
  background: linear-gradient(#5e5e5e, #7e7e7e);
  color: #333;
}
.range span { display: flex; align-items: center; gap: 6px; }
.players { display: flex; gap: 10px; margin-left: 8px; }

/* Materials and coordinates */
.bottom { display: grid; grid-template-columns: minmax(0, 1fr) 329px; gap: 4px; height: 120px; margin-top: 4px; }
.materials { border-left: 1px solid #666; border-right: 1px solid #333; border-bottom: 1px solid #2e2e2e; }
.materials .panel-menu { height: 24px; padding-left: 5px; border-bottom: 1px solid #666; }
.coords { border: 1px solid #666; border-right-color: #333; border-bottom-color: #2e2e2e; }
.coords-head { display: grid; grid-template-columns: 18px 103px 103px 1fr; align-items: center; height: 22px; padding-left: 5px; border-bottom: 1px solid #666; }
.coords-grid {
  display: grid;
  grid-template-columns: 11px 94px 14px 94px 16px 94px;
  row-gap: 3px;
  align-items: center;
  padding: 5px 0 0 3px;
}
.coords-grid label:nth-of-type(3n + 2), .coords-grid label:nth-of-type(3n) { padding-left: 2px; }
.col-pos, .col-dim, .col-rot { margin-top: 2px; }
.col-pos { grid-column: 2; }
.col-dim { grid-column: 4; }
.col-rot { grid-column: 6; }

.status { height: 20px; margin-top: 4px; display: flex; align-items: center; padding-left: 5px; border-top: 1px solid #666; }

/* Object and attribute managers */
.right { display: grid; grid-template-rows: 676fr 687fr; row-gap: 4px; border-left: 1px solid #6a6a6a; }
.dock { display: grid; grid-template-columns: minmax(0, 1fr) 22px; }
.panel { position: relative; display: flex; flex-direction: column; border-right: 1px solid #333; }
.panel-menu-lit { background: #6a6a6a; border-top-color: #6a6a6a; }
.panel-icons { display: flex; gap: 3px; margin-left: auto; padding-right: 2px; }
.wide-icons { gap: 8px; }
.objects { flex: 1; display: grid; grid-template-columns: 82px 40px minmax(0, 1fr); margin-top: 1px; border: 1px solid #666; border-top: 2px solid #2e2e2e; border-left-color: #333; }
.obj-row { height: 20px; display: flex; align-items: center; background: #505050; }
.obj-name { border-right: 1px solid #2e2e2e; }
.obj-name .obj-row { padding-left: 6px; gap: 1px; color: #fba71e; font-weight: 600; }
.obj-name a { margin-left: 3px; }
.obj-flags { border-right: 1px solid #6a6a6a; }

.tabs { display: flex; flex-direction: column; padding-right: 2px; }
.tab { width: 20px; padding: 4px 2px 3px; writing-mode: vertical-rl; line-height: 16px; text-align: left; background: #393939; color: #7c7c7c; border-bottom: 1px solid #555; }
.tab-on { background: #6a6a6a; color: #fba71e; }

.attributes .panel-menu { height: 22px; border-bottom: 1px solid #666; }
.attr-title { display: flex; align-items: center; gap: 4px; height: 28px; padding: 0 5px; }
.attr-tabs { display: flex; width: 499px; height: 18px; margin-left: 2px; border: 1px solid #2c2c2c; border-radius: 3px; background: #6a6a6a; color: #d8d8d8; }
.attr-tabs button { flex: 1 1 0; border-left: 1px solid #2c2c2c; line-height: 16px; }
.attr-tabs .on { background: #8ea9d6; color: #111; border-left: 0; }
.attributes h2 { margin: 6px 4px 4px 2px; height: 16px; padding-left: 2px; background: #333; font-size: 12px; line-height: 16px; font-weight: 700; }
.props { display: flex; flex-direction: column; gap: 2px; padding: 0 5px 0 3px; }
.prop { position: relative; display: grid; grid-template-columns: 121px minmax(0, 1fr) auto auto; align-items: center; height: 17px; padding-left: 10px; }
.prop-text { height: 19px; }
.prop label { display: flex; align-items: center; gap: 3px; padding-right: 3px; white-space: nowrap; }
.prop label::after { content: ""; flex: 1; height: 1px; margin-top: 8px; background: repeating-linear-gradient(90deg, #aaa 0 1px, transparent 1px 5px); }
.prop-color label { padding-right: 20px; }
.prop-color::after { content: ""; position: absolute; left: 122px; border: 4px solid transparent; border-left: 4px solid #151515; border-right: 0; }
.keyed::before { content: ""; position: absolute; left: 2px; width: 6px; height: 7px; border: 1px solid #222; border-radius: 3px; }
.mini { width: 11px; height: 18px; margin-left: 1px; border: 1px solid #333; border-radius: 2px; background: #6c6c6c; display: grid; place-items: center; }
.mini::after { content: ""; border: 3px solid transparent; border-left-color: #ddd; border-right: 0; }
.pick { margin-left: 1px; }
.swatch { width: 34px; height: 15px; background: #ff00b4; }
.note { position: absolute; left: 50px; top: 218px; }
```
